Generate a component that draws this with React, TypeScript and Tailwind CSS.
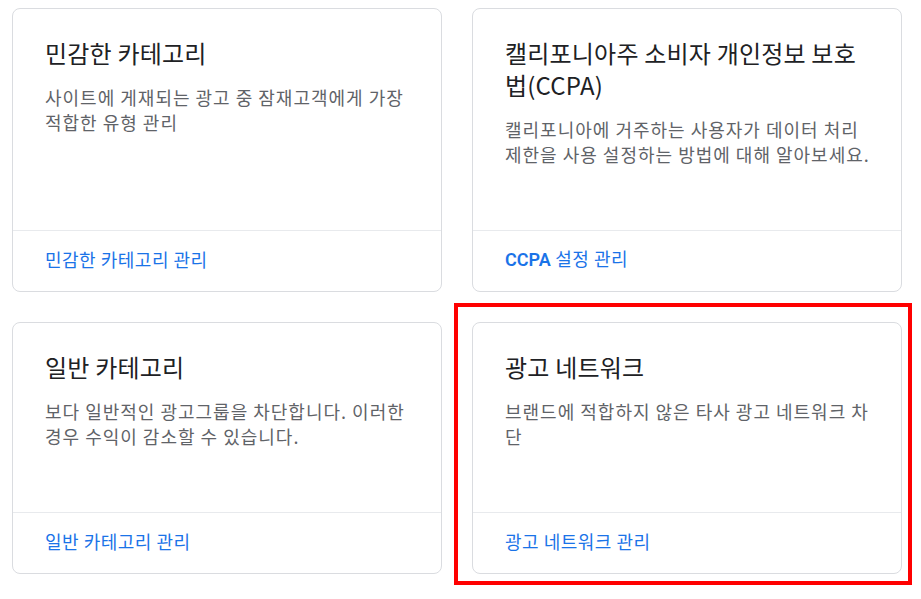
const cards = [
  {
    title: "민감한 카테고리",
    desc: "사이트에 게재되는 광고 중 잠재고객에게 가장 적합한 유형 관리",
    link: "민감한 카테고리 관리",
  },
  {
    title: "캘리포니아주 소비자 개인정보 보호법(CCPA)",
    desc: "캘리포니아에 거주하는 사용자가 데이터 처리 제한을 사용 설정하는 방법에 대해 알아보세요.",
    link: "CCPA 설정 관리",
  },
  {
    title: "일반 카테고리",
    desc: "보다 일반적인 광고그룹을 차단합니다. 이러한 경우 수익이 감소할 수 있습니다.",
    link: "일반 카테고리 관리",
  },
  {
    title: "광고 네트워크",
    desc: "브랜드에 적합하지 않은 타사 광고 네트워크 차단",
    link: "광고 네트워크 관리",
    highlight: true,
  },
];

function Card({ title, desc, link, highlight }: { title: string; desc: string; link: string; highlight?: boolean }) {
  return (
    <div className="relative">
      {highlight && (
        <div className="absolute -left-[18px] -top-[19px] -right-[10px] -bottom-[11px] border-4 border-[#ff0000] pointer-events-none" />
      )}
      <div className="h-full flex flex-col bg-white border border-[#dadce0] rounded-lg">
        <div className="flex-1 pl-8 pr-7 pt-7 pb-[63px]">
          <h2 className="text-[24px] leading-8 tracking-[0.2px] text-[#202124] font-normal">{title}</h2>
          <p className="mt-4 text-[18px] leading-[25px] tracking-[1px] text-[#5f6368]">{desc}</p>
        </div>
        <div className="border-t border-[#e8eaed] h-[61px] px-8 flex items-center pb-1">
          <a className="text-[18px] tracking-[0.5px] text-[#1a73e8] cursor-pointer">
            {link.startsWith("CCPA") ? (
              <>
                <span className="font-semibold tracking-normal" style={{ fontFamily: "Roboto, sans-serif" }}>CCPA</span>
                {link.slice(4)}
              </>
            ) : (
              link
            )}
          </a>
        </div>
      </div>
    </div>
  );
}

export default function App() {
  return (
    <div
      className="w-[921px] h-[599px] bg-white pl-3 pt-2"
      style={{ fontFamily: '"Noto Sans CJK KR", "Noto Sans", sans-serif' }}
    >
      <div className="grid grid-cols-[430px_430px] gap-[30px]">
        {cards.map((c) => (
          <Card key={c.title} {...c} />
        ))}
      </div>
    </div>
  );
}
